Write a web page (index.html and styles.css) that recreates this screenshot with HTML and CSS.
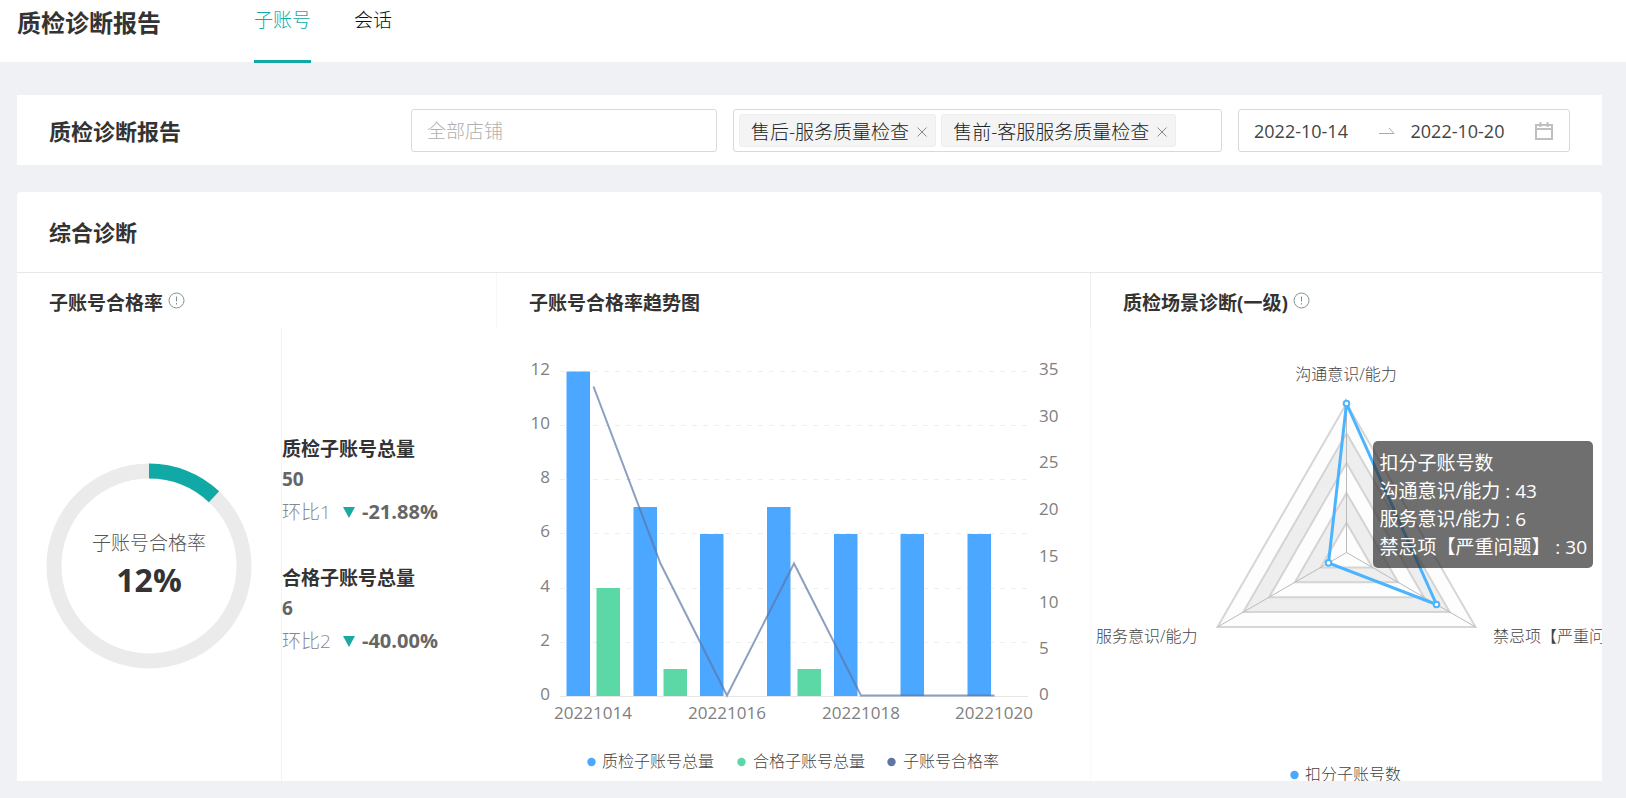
FILE: index.html
```html
<!DOCTYPE html>
<html lang="zh-CN">
<head>
<meta charset="utf-8">
<title>质检诊断报告</title>
<link rel="stylesheet" href="styles.css">
</head>
<body>
<header class="topbar">
  <h1 class="topbar-title">质检诊断报告</h1>
  <nav class="tabs">
    <a class="tab tab-active" href="#account">子账号</a>
    <a class="tab" href="#session">会话</a>
  </nav>
</header>

<main class="page">
  <section class="filters">
    <h2 class="card-title">质检诊断报告</h2>
    <input class="field shop" type="text" placeholder="全部店铺" aria-label="店铺">
    <div class="field tags">
      <span class="tag">售后-服务质量检查
        <button class="tag-close" type="button" aria-label="移除 售后-服务质量检查"><svg width="10" height="10" viewBox="0 0 10 10"><path d="M0.5 0.5L9.5 9.5M9.5 0.5L0.5 9.5"/></svg></button>
      </span>
      <span class="tag">售前-客服服务质量检查
        <button class="tag-close" type="button" aria-label="移除 售前-客服服务质量检查"><svg width="10" height="10" viewBox="0 0 10 10"><path d="M0.5 0.5L9.5 9.5M9.5 0.5L0.5 9.5"/></svg></button>
      </span>
    </div>
    <div class="field range">
      <input class="date" type="text" value="2022-10-14" aria-label="开始日期">
      <svg class="range-arrow" width="16" height="8" viewBox="0 0 16 8"><path d="M0 6.500H15L10 1"/></svg>
      <input class="date" type="text" value="2022-10-20" aria-label="结束日期">
      <svg class="calendar" width="18" height="18" viewBox="0 0 18 18"><path d="M1 3H17V17H1ZM1 7H17M5.500 0V5M12.500 0V5"/></svg>
    </div>
  </section>

  <section class="report">
    <div class="report-head"><h2 class="card-title">综合诊断</h2></div>
    <div class="panels">
      <section class="panel">
        <div class="panel-head panel-head-first">
          <h3 class="panel-title">子账号合格率</h3>
          <svg class="info" width="17" height="17" viewBox="0 0 17 17"><circle cx="8.500" cy="8.500" r="7.500"/><path d="M8.500 4.500V9.500M8.500 11V12.500"/></svg>
        </div>
        <div class="rate-body">
          <div class="donut-cell">
            <svg class="donut" width="206" height="206" viewBox="0 0 206 206">
              <circle class="donut-track" cx="103" cy="103" r="95"/>
              <path class="donut-value" d="M103 8A95 95 0 0 1 168.030 33.750"/>
              <text class="donut-label" x="103" y="87">子账号合格率</text>
              <text class="donut-number" x="103" y="129">12%</text>
            </svg>
          </div>
          <div class="stats">
            <div class="stat">
              <h4 class="stat-title">质检子账号总量</h4>
              <p class="stat-count">50</p>
              <p class="stat-change"><span class="stat-basis">环比1</span><i class="down"></i><b class="stat-percent">-21.88%</b></p>
            </div>
            <div class="stat">
              <h4 class="stat-title">合格子账号总量</h4>
              <p class="stat-count">6</p>
              <p class="stat-change"><span class="stat-basis">环比2</span><i class="down"></i><b class="stat-percent">-40.00%</b></p>
            </div>
          </div>
        </div>
      </section>

      <section class="panel">
        <div class="panel-head"><h3 class="panel-title">子账号合格率趋势图</h3></div>
        <svg class="chart" viewBox="0 0 594 453">
          <g class="grid">
            <path d="M63 43.500H531M63 97.500H531M63 151.500H531M63 205.500H531M63 260.500H531M63 314.500H531"/>
          </g>
          <path class="axis" d="M63 368.500H531"/>
          <g class="bar-total">
            <rect x="69.500" y="43.500" width="23.500" height="324.500"/>
            <rect x="136.500" y="179" width="23.500" height="189"/>
            <rect x="203" y="206" width="23.500" height="162"/>
            <rect x="270" y="179" width="23.500" height="189"/>
            <rect x="337" y="206" width="23.500" height="162"/>
            <rect x="403.500" y="206" width="23.500" height="162"/>
            <rect x="470.500" y="206" width="23.500" height="162"/>
          </g>
          <g class="bar-pass">
            <rect x="99.500" y="260" width="23.500" height="108"/>
            <rect x="166.500" y="341" width="23.500" height="27"/>
            <rect x="300.500" y="341" width="23.500" height="27"/>
          </g>
          <polyline class="rate-line" points="96.500,58.500 163.500,235.500 230,367.500 297,235.500 364,367.500 431,367.500 497.500,367.500"/>
          <g class="label end">
            <text x="53" y="47">12</text><text x="53" y="101">10</text><text x="53" y="155">8</text><text x="53" y="209">6</text><text x="53" y="264">4</text><text x="53" y="318">2</text><text x="53" y="372">0</text>
          </g>
          <g class="label">
            <text x="542" y="47">35</text><text x="542" y="94">30</text><text x="542" y="140">25</text><text x="542" y="187">20</text><text x="542" y="234">15</text><text x="542" y="280">10</text><text x="542" y="326">5</text><text x="542" y="372">0</text>
          </g>
          <g class="label middle">
            <text x="96" y="391">20221014</text><text x="230" y="391">20221016</text><text x="364" y="391">20221018</text><text x="497" y="391">20221020</text>
          </g>
          <circle class="dot-total" cx="94.500" cy="434" r="4.200"/>
          <circle class="dot-pass" cx="244.500" cy="434" r="4.200"/>
          <circle class="dot-rate" cx="394.500" cy="434" r="4.200"/>
          <g class="legend">
            <text x="105" y="439">质检子账号总量</text><text x="256" y="439">合格子账号总量</text><text x="406" y="439">子账号合格率</text>
          </g>
        </svg>
      </section>

      <section class="panel panel-scene">
        <div class="panel-head panel-head-scene">
          <h3 class="panel-title">质检场景诊断(一级)</h3>
          <svg class="info" width="17" height="17" viewBox="0 0 17 17"><circle cx="8.500" cy="8.500" r="7.500"/><path d="M8.500 4.500V9.500M8.500 11V12.500"/></svg>
        </div>
        <div class="radar-wrap">
          <svg class="chart" viewBox="0 0 511 453">
            <g class="rings">
              <path class="ring-light" d="M255.500 75.500L384.500 299H126.500Z"/>
              <path class="ring-dark" d="M255.500 105.300L358.700 284.100H152.300Z"/>
              <path class="ring-light" d="M255.500 135.100L332.900 269.200H178.100Z"/>
              <path class="ring-dark" d="M255.500 164.900L307.100 254.300H203.900Z"/>
              <path class="ring-light" d="M255.500 194.700L281.300 239.400H229.700Z"/>
            </g>
            <path class="spokes" d="M255.500 224.500V75.500M255.500 224.500L384.500 299M255.500 224.500L126.500 299"/>
            <path class="radar-line" d="M255.500 75.500L237.500 234.900L345.500 276.500Z"/>
            <g class="radar-points">
              <circle cx="255.500" cy="75.500" r="2.800"/><circle cx="237.500" cy="234.900" r="2.800"/><circle cx="345.500" cy="276.500" r="2.800"/>
            </g>
            <g class="legend">
              <text class="middle" x="255" y="52">沟通意识/能力</text>
              <text x="5" y="314">服务意识/能力</text>
              <text x="402" y="314">禁忌项【严重问题】</text>
              <text x="214" y="452">扣分子账号数</text>
            </g>
            <circle class="dot-total" cx="203.500" cy="447" r="4.200"/>
          </svg>
          <div class="tooltip" role="tooltip">扣分子账号数<br>沟通意识/能力 : 43<br>服务意识/能力 : 6<br>禁忌项【严重问题】 : 30</div>
        </div>
      </section>
    </div>
  </section>
</main>
</body>
</html>
```

FILE: styles.css
```css
* { box-sizing: border-box; }

body {
  margin: 0;
  background: #f0f1f5;
  color: #333;
  font-family: "Open Sans", "Noto Sans CJK SC", sans-serif;
  font-size: 19px;
}

h1, h2, h3, h4, p { margin: 0; }

.topbar {
  display: flex;
  gap: 93px;
  height: 62px;
  padding: 0 17px;
  background: #fff;
}
.topbar-title { font-size: 24px; line-height: 46px; }
.tabs { display: flex; align-items: flex-start; gap: 43px; }
.tab {
  padding-bottom: 20px;
  color: #111;
  font-weight: 300;
  line-height: 40px;
  text-decoration: none;
}
.tab-active { border-bottom: 3px solid #11a9a5; color: #11a9a5; }

.page { padding: 33px 24px 18px 17px; }

.filters {
  display: grid;
  grid-template-columns: 346fr 306fr 489fr 332fr;
  align-items: center;
  gap: 16px;
  padding: 14px 32px 13px;
  background: #fff;
}
.card-title { font-size: 22px; line-height: 32px; }
.field {
  min-width: 0;
  height: 43px;
  border: 1px solid #d9d9d9;
  border-radius: 3px;
  background: #fff;
}
.shop { padding: 0 15px; font: inherit; font-weight: 300; }
.shop::placeholder { color: #b0b0b0; }
.tags { display: flex; align-items: center; gap: 5px; padding: 0 5px; color: #222; font-weight: 300; }
.tag {
  display: flex;
  align-items: center;
  gap: 8px;
  height: 33px;
  padding: 0 8px 0 11px;
  border: 1px solid #eee;
  border-radius: 3px;
  background: #f4f4f4;
  white-space: nowrap;
}
.tag-close { display: flex; padding: 3px 0 0; border: 0; background: none; }
.tag-close svg { fill: none; stroke: #888; }
.range { display: flex; align-items: center; padding: 0 16px 0 15px; }
.date {
  flex: 1;
  min-width: 0;
  padding: 0;
  border: 0;
  background: none;
  color: #444;
  font: inherit;
  font-size: 18px;
}
.range-arrow { margin-right: 16px; fill: none; stroke: #aaa; }
.calendar { fill: none; stroke: #bfbfbf; stroke-width: 2px; }

.report {
  margin-top: 27px;
  overflow: hidden;
  border-radius: 4px 4px 0 0;
  background: #fff;
}
.report-head { padding: 24px 32px; border-bottom: 1px solid #e8e8e8; }
.panels { display: grid; grid-template-columns: 480fr 594fr 511fr; }
.panel { min-width: 0; }
.panel-head { display: flex; align-items: center; gap: 5px; height: 55px; padding: 4px 32px 0; }
.panel-head-first { border-right: 1px solid #f8f8f8; }
.panel-head-scene { box-shadow: -1px 0 #eee; }
.panel-scene { box-shadow: -1px 0 #fafafa; }
.panel-title { font-size: 19px; line-height: 28px; }
.info { fill: none; stroke: #7f9492; margin-bottom: 4px; }

.rate-body { display: grid; grid-template-columns: 264fr 216fr; height: calc(100% - 55px); }
.donut-cell { display: flex; align-items: center; justify-content: center; padding-top: 23px; }
.donut { fill: none; }
.donut-track { stroke: #ebebeb; stroke-width: 15px; }
.donut-value { stroke: #11a9a5; stroke-width: 15px; }
.donut-label, .donut-number { text-anchor: middle; }
.donut-label { fill: #555; font-weight: 300; }
.donut-number { fill: #333; font-size: 32px; font-weight: 700; }

.stats {
  display: flex;
  flex-direction: column;
  gap: 33px;
  padding-top: 106px;
  border-left: 1px solid #f3f3f5;
}
.stat-title { font-size: 19px; line-height: 30px; }
.stat-count { color: #666; font-size: 19px; font-weight: 700; line-height: 30px; }
.stat-change { display: flex; align-items: center; color: #666; line-height: 36px; }
.stat-basis { width: 61px; color: #888; font-weight: 300; }
.stat-percent { font-size: 20px; }
.down {
  margin-right: 7px;
  border: 6px solid transparent;
  border-top: 11px solid #1ba9a3;
  border-bottom: 0;
}

.chart { display: block; width: 100%; overflow: hidden; }
.grid { stroke: #eee; stroke-width: 1px; stroke-dasharray: 5 6; }
.axis { stroke: #e6e6e6; }
.bar-total, .dot-total { fill: #4ba7ff; }
.bar-pass, .dot-pass { fill: #5bd8a6; }
.dot-rate { fill: #5d76a2; }
.rate-line { fill: none; stroke: #5b76a5; stroke-width: 2px; stroke-opacity: 0.7; }
.label { fill: #808080; font-size: 17px; }
.legend { fill: #444; font-size: 16px; font-weight: 300; }
.end { text-anchor: end; }
.middle { text-anchor: middle; }

.rings { stroke: #ccc; stroke-width: 2px; stroke-opacity: 0.8; }
.ring-light { fill: #fdfdfd; }
.ring-dark { fill: #eee; }
.spokes { stroke: #bbb; }
.radar-line { fill: none; stroke: #4cb4ff; stroke-width: 3px; }
.radar-points { fill: #fff; stroke: #4cb4ff; stroke-width: 2px; }
.radar-wrap { position: relative; }
.tooltip {
  position: absolute;
  top: 113px;
  right: 9px;
  padding: 8px 6px 7px;
  border-radius: 5px;
  background: rgba(50, 50, 50, 0.7);
  color: #fff;
  line-height: 28px;
  white-space: nowrap;
}
```
